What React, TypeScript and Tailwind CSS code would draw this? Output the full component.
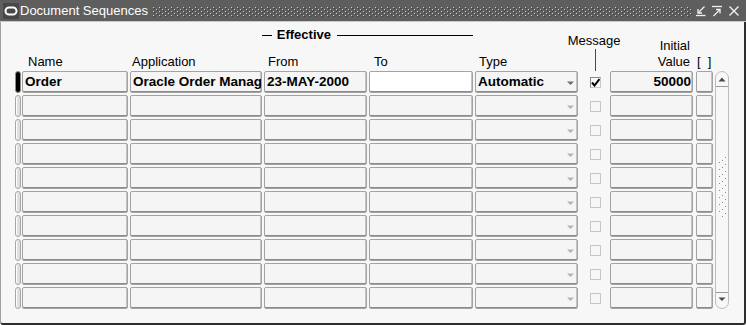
import React from "react";

type FieldProps = {
  w: string;
  ml?: string;
  white?: boolean;
  right?: boolean;
  arrow?: "dark" | "light";
  children?: React.ReactNode;
};

const Field = ({ w, ml = "", white, right, arrow, children }: FieldProps) => (
  <div
    className={`relative ${w} ${ml} h-full shrink-0 overflow-hidden whitespace-nowrap rounded-[2px] border border-[#a3a3a3] shadow-[inset_0_-1px_0_#8a8a8a,inset_-1px_0_0_#c4c4c4] ${
      white ? "bg-white" : "bg-[#f5f5f5]"
    } flex items-center ${right ? "justify-end pr-[1px]" : "pl-[2px]"} text-[13.5px] font-bold leading-[20px] text-black`}
  >
    {children}
    {arrow && (
      <svg
        className="absolute right-[2px] top-[9px]"
        width="9"
        height="5"
        viewBox="0 0 9 5"
      >
        <path d="M1 0.5 H8 L4.5 4 Z" fill={arrow === "dark" ? "#6e6e6e" : "#b3b3b3"} />
      </svg>
    )}
  </div>
);

const Indicator = ({ active }: { active?: boolean }) => (
  <div
    className={`w-[6px] h-full shrink-0 rounded-[3px] border ${
      active
        ? "bg-black border-[#8c8c8c]"
        : "bg-[#dedede] border-[#a6a6a6] shadow-[inset_1px_0_0_#ffffff]"
    }`}
  />
);

const Checkbox = ({ checked }: { checked?: boolean }) => (
  <div className="w-[32px] h-full shrink-0 flex items-center pl-[12px]">
    <div
      className={`w-[11px] h-[11px] border ${
        checked
          ? "border-[#8a8a8a] border-b-[#c8c8c8] border-r-[#c8c8c8] bg-[#f7f7f7]"
          : "border-[#c6c6c6] bg-[#f7f7f7]"
      } flex items-center justify-center`}
    >
      {checked && (
        <svg width="9" height="9" viewBox="0 0 9 9">
          <path d="M1 4.5 L3.5 7.5 L8.5 1" stroke="#000" strokeWidth="2" fill="none" />
        </svg>
      )}
    </div>
  </div>
);

const Row = ({ first }: { first?: boolean }) => (
  <div className="flex h-[22px]">
    <Indicator active={first} />
    <Field w="w-[106px]" ml="ml-[1px]">{first ? "Order" : null}</Field>
    <Field w="w-[132px]" ml="ml-[2px]">{first ? "Oracle Order Manag" : null}</Field>
    <Field w="w-[103px]" ml="ml-[2px]">{first ? "23-MAY-2000" : null}</Field>
    <Field w="w-[104px]" ml="ml-[2px]" white={first} />
    <Field w="w-[103px]" ml="ml-[2px]" arrow={first ? "dark" : "light"}>
      {first ? "Automatic" : null}
    </Field>
    <Checkbox checked={first} />
    <Field w="w-[83px]" right>
      {first ? "50000" : null}
    </Field>
    <Field w="w-[17px]" ml="ml-[3px]" />
  </div>
);

const TitleDots = () => (
  <svg className="flex-1 h-[10px]" height="10">
    <defs>
      <pattern id="dots" width="6" height="4" patternUnits="userSpaceOnUse">
        <rect x="0" y="0" width="1" height="1" fill="#cfcfcf" />
        <rect x="1" y="1" width="1" height="1" fill="#3a3a3a" />
        <rect x="3" y="2" width="1" height="1" fill="#cfcfcf" />
        <rect x="4" y="3" width="1" height="1" fill="#3a3a3a" />
      </pattern>
    </defs>
    <rect x="0" y="0" width="100%" height="10" fill="url(#dots)" />
  </svg>
);

const Grip = () => {
  const items = [];
  for (let i = 0; i < 9; i++) {
    const y = i * 7;
    items.push(
      <g key={i}>
        <rect x="7" y={y} width="1" height="1" fill="#8a8a8a" />
        <rect x="6" y={y + 1} width="1" height="1" fill="#ffffff" />
        <rect x="4" y={y + 3} width="1" height="1" fill="#8a8a8a" />
        <rect x="3" y={y + 4} width="1" height="1" fill="#ffffff" />
        <rect x="1" y={y + 5} width="1" height="1" fill="#8a8a8a" />
      </g>
    );
  }
  return (
    <svg width="9" height="60" viewBox="0 0 9 60">
      {items}
    </svg>
  );
};

const Scrollbar = () => (
  <div className="ml-[2px] w-[14px] h-[238px] shrink-0 rounded-[7px] border border-[#bdbdbd] bg-[#f7f7f7] flex flex-col items-center">
    <svg width="12" height="14" viewBox="0 0 12 14" className="mt-[3px]">
      <path d="M2.5 6.5 H9.5 L6 2.5 Z" fill="#4a4a4a" />
      <rect x="0" y="11" width="12" height="1" fill="#9a9a9a" />
    </svg>
    <div className="mt-[68px]">
      <Grip />
    </div>
    <div className="flex-1" />
    <svg width="12" height="14" viewBox="0 0 12 14" className="mb-[3px]">
      <rect x="0" y="1" width="12" height="1" fill="#9a9a9a" />
      <path d="M2.5 6.5 H9.5 L6 10 Z" fill="#4a4a4a" />
    </svg>
  </div>
);

export default function App() {
  const rows = Array.from({ length: 10 }, (_, i) => i);
  return (
    <div className="w-[746px] h-[325px] flex flex-col font-['Liberation_Sans',Arial,sans-serif] text-black">
      {/* Title bar */}
      <div className="h-[22px] shrink-0 bg-[#5e5e5e] border-b border-[#c9c9c9] flex items-center">
        <div className="ml-[3px] w-[16px] h-[16px] bg-[#484848] flex items-center justify-center">
          <svg width="14" height="10" viewBox="0 0 14 10">
            <rect x="1.5" y="1.5" width="11" height="7" rx="3.5" fill="none" stroke="#ffffff" strokeWidth="2" />
          </svg>
        </div>
        <span className="ml-[1px] text-[13px] leading-[16px] text-white whitespace-nowrap">Document Sequences</span>
        <div className="ml-[5px] flex-1 flex items-center pt-[2px]">
          <TitleDots />
        </div>
        <svg width="10" height="12" viewBox="0 0 10 12" className="ml-[4px]">
          <path d="M8.5 1.5 L2 8" stroke="#f0f0f0" strokeWidth="1.3" fill="none" />
          <path d="M2 4 V8 H6" stroke="#f0f0f0" strokeWidth="1.3" fill="none" />
          <path d="M0 10.5 H9.5" stroke="#f0f0f0" strokeWidth="1.3" fill="none" />
        </svg>
        <svg width="12" height="12" viewBox="0 0 12 12" className="ml-[5px]">
          <path d="M1 1.5 H11" stroke="#f0f0f0" strokeWidth="1.3" fill="none" />
          <path d="M2.5 11 L9 4.5" stroke="#f0f0f0" strokeWidth="1.3" fill="none" />
          <path d="M5 4.5 H9 V8.5" stroke="#f0f0f0" strokeWidth="1.3" fill="none" />
        </svg>
        <svg width="12" height="12" viewBox="0 0 12 12" className="ml-[5px] mr-[6px]">
          <path d="M1.5 1.5 L10.5 10.5 M10.5 1.5 L1.5 10.5" stroke="#f0f0f0" strokeWidth="1.4" fill="none" />
        </svg>
      </div>

      {/* Body */}
      <div className="flex-1 bg-[#f7f7f7] border-l border-l-[#a0a0a0] border-r-2 border-r-[#2e2e2e] border-b-2 border-b-[#2e2e2e] rounded-b-[3px] pl-[14px]">
        {/* Header */}
        <div className="h-[49px] flex items-end text-[13px] leading-[16px]">
          <div className="w-[113px] shrink-0 pl-[13px] mb-[1px]">Name</div>
          <div className="ml-[2px] w-[132px] shrink-0 pl-[2px] mb-[1px]">Application</div>
          <div className="ml-[2px] w-[209px] shrink-0 flex flex-col mb-[1px]">
            <div className="flex items-center h-[16px] ml-[-2px]">
              <div className="w-[10px] h-px bg-black" />
              <span className="ml-[5px] font-bold">Effective</span>
              <div className="ml-[6px] w-[139px] h-px bg-black" />
            </div>
            <div className="flex mt-[11px]">
              <div className="w-[105px] pl-[4px]">From</div>
              <div className="pl-[5px]">To</div>
            </div>
          </div>
          <div className="ml-[2px] w-[103px] shrink-0 pl-[4px] mb-[1px]">Type</div>
          <div className="w-[32px] shrink-0 flex flex-col items-center">
            <div className="whitespace-nowrap">Message</div>
            <div className="self-start ml-[17px] w-px h-[22px] bg-[#4a4a4a]" />
          </div>
          <div className="w-[83px] shrink-0 flex flex-col items-end pr-[3px] mb-[1px]">
            <div>Initial</div>
            <div>Value</div>
          </div>
          <div className="ml-[3px] w-[17px] shrink-0 pl-[1px] mb-[1px] whitespace-nowrap">[&nbsp;&nbsp;]</div>
        </div>

        {/* Rows + scrollbar */}
        <div className="flex">
          <div className="flex flex-col gap-[2px]">
            {rows.map((i) => (
              <Row key={i} first={i === 0} />
            ))}
          </div>
          <Scrollbar />
        </div>
      </div>
    </div>
  );
}
